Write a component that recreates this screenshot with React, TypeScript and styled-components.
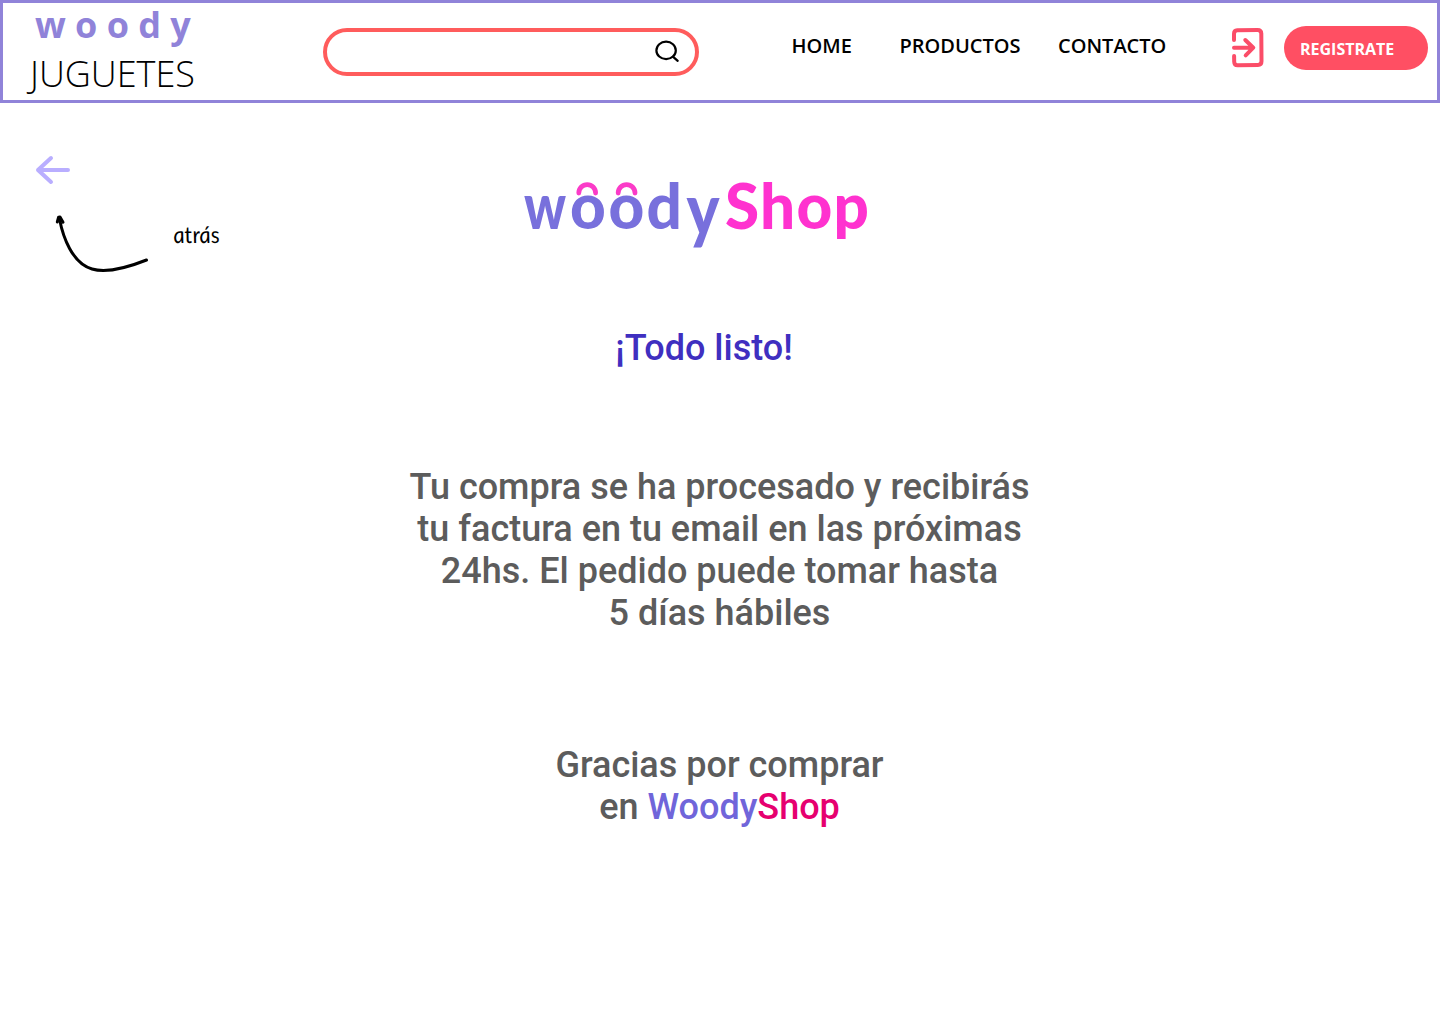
import React from "react";
import styled, { createGlobalStyle } from "styled-components";

const GlobalStyle = createGlobalStyle`
  *, *::before, *::after { box-sizing: border-box; }
  html, body { margin: 0; background: #fff; }
  button, input { font: inherit; border: 0; padding: 0; background: none; outline: none; }
`;

const Page = styled.div`
  width: 1440px;
  height: 1024px;
  overflow: hidden;
  background: #fff;
  font-family: Roboto, sans-serif;
`;

const Header = styled.header`
  display: flex;
  align-items: flex-start;
  height: 103px;
  border: 3px solid #9083d9;
  font-family: "Open Sans", sans-serif;
`;

const Brand = styled.div`
  display: flex;
  flex-direction: column;
  width: 320px;
  margin-top: -3px;
  padding-left: 27px;
`;

const BrandLine = styled.span<{ $strong?: boolean }>`
  font-size: 36px;
  line-height: 49px;
  white-space: nowrap;
  font-weight: ${(p) => (p.$strong ? 700 : 300)};
  color: ${(p) => (p.$strong ? "#9083d9" : "#000")};
  letter-spacing: ${(p) => (p.$strong ? "9.3px" : "0")};
  padding-left: ${(p) => (p.$strong ? "5px" : "0")};
`;

const Search = styled.label`
  display: flex;
  align-items: center;
  width: 376px;
  height: 48px;
  margin-top: 25px;
  padding: 0 14.5px 0 18px;
  border: 4px solid #ff5c5c;
  border-radius: 24px;
`;

const SearchInput = styled.input`
  flex: 1;
  min-width: 0;
  font-size: 18px;
`;

const Nav = styled.nav`
  display: flex;
  margin: 29px 0 0 92.5px;
`;

const NavLink = styled.a<{ $width: number }>`
  width: ${(p) => p.$width}px;
  font-size: 20px;
  line-height: 27px;
  font-weight: 600;
  color: #000;
  white-space: nowrap;
`;

const LoginButton = styled.button`
  display: flex;
  margin: 23px 0 0 4px;
`;

const Register = styled.button`
  width: 144.5px;
  height: 44px;
  margin: 23px 0 0 19.5px;
  padding: 1px 0 0 16.5px;
  border-radius: 22px;
  background: #ff4f63;
  color: #fff;
  font-size: 16px;
  line-height: 22px;
  font-weight: 700;
  text-align: left;
`;

const Main = styled.main`
  display: grid;
  grid-template-columns: 400px 639px 401px;
`;

const Back = styled.aside`
  display: flex;
  flex-direction: column;
  align-items: flex-start;
  padding: 51px 0 0 34px;
`;

const Hint = styled.div`
  display: flex;
  align-items: flex-start;
  margin-top: 24px;
`;

const HintText = styled.span`
  margin: 10px 0 0 24px;
  font-family: Lato, sans-serif;
  font-style: italic;
  font-size: 23px;
  line-height: 28px;
  transform: skewX(8deg) scaleX(0.96);
  transform-origin: 0 75%;
  color: #000;
`;

const Content = styled.section`
  display: flex;
  flex-direction: column;
  align-items: center;
  padding-top: 47px;
`;

const Logo = styled.svg`
  display: block;
  margin-right: 47px;
  overflow: visible;
  font-family: Lato, sans-serif;
  font-size: 62px;
  font-weight: 900;
`;

const Title = styled.h1`
  margin: 67px 31px 0 0;
  font-size: 36px;
  line-height: 42px;
  font-weight: 500;
  color: #3f2fc0;
`;

const Message = styled.p<{ $gap: number }>`
  margin: ${(p) => p.$gap}px 0 0;
  font-size: 36px;
  line-height: 42px;
  font-weight: 500;
  text-align: center;
  white-space: nowrap;
  color: #5c5c5c;
`;

const Tint = styled.span<{ $color: string }>`
  color: ${(p) => p.$color};
`;

export default function App() {
  return (
    <Page>
      <GlobalStyle />
      <Header>
        <Brand>
          <BrandLine $strong>woody</BrandLine>
          <BrandLine>JUGUETES</BrandLine>
        </Brand>
        <Search>
          <SearchInput aria-label="Buscar" />
          <svg width="28" height="24" viewBox="0 0 28 24" fill="none" stroke="#000" strokeWidth="2.2" strokeLinecap="round">
            <ellipse cx="13.1" cy="10.4" rx="9.7" ry="8.7" />
            <path d="M19.9 16.6 24.7 20.8" />
          </svg>
        </Search>
        <Nav>
          <NavLink $width={108}>HOME</NavLink>
          <NavLink $width={158.5}>PRODUCTOS</NavLink>
          <NavLink $width={168}>CONTACTO</NavLink>
        </Nav>
        <LoginButton aria-label="Ingresar">
          <svg width="34" height="42" viewBox="0 0 34 42" fill="none" stroke="#fb4d68" strokeWidth="4" strokeLinecap="round" strokeLinejoin="round">
            <path d="M4 14V8Q4 4.4 7.2 4.3L27.6 3.9Q31.2 3.9 31.3 7.5L31.5 35.3Q31.5 38.9 27.9 39L7.6 39.3Q4.300 39.3 4.200 35.7L4.100 30" />
            <path d="M4 21.8H22.500M15.300 14 23.300 21.700 15.700 29.300" />
          </svg>
        </LoginButton>
        <Register>REGISTRATE</Register>
      </Header>
      <Main>
        <Back>
          <svg width="38" height="32" viewBox="0 0 38 32" fill="none" stroke="#b9aeff" strokeWidth="4" strokeLinecap="round" strokeLinejoin="round">
            <path d="M34 16H4M17 4 4 16 17 28" />
          </svg>
          <Hint>
            <svg width="116" height="64" viewBox="0 0 116 64" fill="none" stroke="#000" strokeWidth="3" strokeLinecap="round" strokeLinejoin="round">
              <path d="M25.5 9C29 27 38 53 58 59C72 63 90 59 112.5 50" />
              <path d="M23.3 12 24.6 7.2 26 7 29 12.3" />
            </svg>
            <HintText>atrás</HintText>
          </Hint>
        </Back>
        <Content>
          <Logo width="360" height="110" viewBox="516 150 360 110" role="img" aria-label="woodyShop">
            <g fill="#7870dc">
              <text transform="translate(524 228.5) scale(0.84 1)">w</text>
              <text y="228.5" x="570 608.5 646.5">ood</text>
              <text transform="translate(686.5 235) scale(1 1.18)">y</text>
            </g>
            <text y="228.5" x="725 760 796.5 833.5" fill="#ff32cf">Shop</text>
            <g fill="none" stroke="#fb3bc8" strokeWidth="4.8" strokeLinecap="round">
              <path d="M578.8 193A8.4 8.4 0 0 1 595.6 193" />
              <path d="M618.2 193A8.4 8.4 0 0 1 635 193" />
            </g>
          </Logo>
          <Title>¡Todo listo!</Title>
          <Message $gap={97}>
            Tu compra se ha procesado y recibirás
            <br />
            tu factura en tu email en las próximas
            <br />
            24hs. El pedido puede tomar hasta
            <br />5 días hábiles
          </Message>
          <Message $gap={110}>
            Gracias por comprar
            <br />
            en <Tint $color="#7065da">Woody</Tint>
            <Tint $color="#e6006f">Shop</Tint>
          </Message>
        </Content>
      </Main>
    </Page>
  );
}
